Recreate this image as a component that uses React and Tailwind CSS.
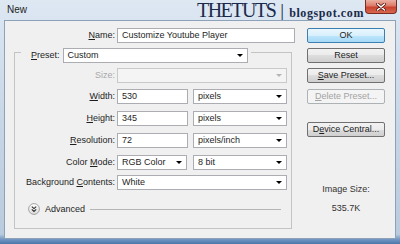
import React from 'react';

const labelCls = 'text-right text-[9px] leading-[15px] text-[#1e1e1e]';

const Key = ({ children }) => <span className="underline underline-offset-[1px]">{children}</span>;

const TextBox = ({ value, className = '' }) => (
  <div className={`h-[15px] bg-white border border-[#abadb3] pl-[4px] flex items-center text-[9px] text-[#1e1e1e] ${className}`}>
    {value}
  </div>
);

const Select = ({ value, className = '', disabled = false }) => (
  <div
    className={`h-[15px] border flex items-center pl-[4px] text-[9px] text-[#1e1e1e] ${
      disabled ? 'bg-[#f4f4f4] border-[#c9c9c9]' : 'bg-white border-[#abadb3]'
    } ${className}`}
  >
    <span>{value}</span>
    <span
      className={`ml-auto mr-[4px] w-0 h-0 border-l-[3px] border-r-[3px] border-t-[3px] border-l-transparent border-r-transparent ${
        disabled ? 'border-t-[#b5b5b5]' : 'border-t-black'
      }`}
    />
  </div>
);

const Button = ({ children, variant = 'normal', className = '' }) => {
  const styles = {
    normal: 'border-[#707070] bg-[linear-gradient(#f2f2f2,#ebebeb_50%,#dddddd_50%,#cfcfcf)] text-[#1e1e1e]',
    primary: 'border-[#3c7fb1] bg-[linear-gradient(#eaf6fd,#d9f0fc_50%,#bee6fd_50%,#a7d9f5)] text-[#1e1e1e]',
    disabled: 'border-[#adb2b5] bg-[#f4f4f4] text-[#a3a3a3]',
  };
  return (
    <div
      className={`h-[15px] w-[78px] rounded-[2px] border flex items-center justify-center text-[9px] ${styles[variant]} ${className}`}
    >
      {children}
    </div>
  );
};

const Row = ({ label, children, className = '' }) => (
  <div className={`flex items-start ${className}`}>
    <div className={`w-[100px] ${labelCls}`}>{label}</div>
    <div className="ml-[2px] flex items-start">{children}</div>
  </div>
);

export default function App() {
  return (
    <div className="w-[400px] h-[244px] flex flex-col overflow-hidden font-['Liberation_Sans',Arial,sans-serif] bg-[linear-gradient(#dde8f3,#cbd9e8_40%,#b9cbde_96%,#7598c3_98%,#4a76ab)]">
      {/* Title bar */}
      <div className="h-[20px] flex items-start shrink-0">
        <span className="ml-[7px] mt-[4px] text-[10px] leading-[12px] text-[#1e1e1e]">New</span>
        <div className="ml-auto flex items-start">
          <div className="flex items-baseline text-[#1b2a4a] font-['Liberation_Serif','Times_New_Roman',serif] mt-[1px]">
            <span className="text-[20px] leading-[19px] tracking-[-1.5px]">THETUTS</span>
            <span className="text-[19px] leading-[19px] ml-[5px]">|</span>
            <span className="text-[12px] leading-[19px] font-bold tracking-[0.6px] ml-[5px]">blogspot.com</span>
          </div>
          <div className="ml-[1px] mr-[3px] w-[32px] h-[14px] rounded-b-[4px] border border-t-0 border-[#7a2c22] bg-[linear-gradient(#eab0a2,#dc7a68_45%,#c8432f_55%,#d8684e)] flex items-center justify-center">
            <svg width="10" height="8" viewBox="0 0 10 8">
              <path d="M1.5 1 L8.5 7 M8.5 1 L1.5 7" stroke="#5a1a12" strokeWidth="3" strokeLinecap="round" />
              <path d="M1.5 1 L8.5 7 M8.5 1 L1.5 7" stroke="#ffffff" strokeWidth="1.6" strokeLinecap="round" />
            </svg>
          </div>
        </div>
      </div>

      {/* Client area */}
      <div className="flex-1 ml-[4px] mr-[4px] mb-[5px] border border-[#8da2b8] bg-[#f0f0f0] flex">
        {/* Left section */}
        <div className="pl-[9px] pt-[7px] w-[290px]">
          <div className="flex items-start">
            <div className={`w-[101px] ${labelCls}`}>
              <Key>N</Key>ame:
            </div>
            <TextBox value="Customize Youtube Player" className="ml-[2px] w-[178px]" />
          </div>

          {/* Preset group */}
          <div className="w-[278px] mt-[5px]">
            <div className="flex items-start h-[15px]">
              <div className="w-[7px] h-[11px] mt-[4px] border-t border-l border-[#c3c3c3]" />
              <div className="flex items-start pl-[10px] pr-[3px]">
                <span className="text-[9px] leading-[15px] text-[#1e1e1e]">
                  <Key>P</Key>reset:
                </span>
                <Select value="Custom" className="ml-[3px] w-[185px]" />
              </div>
              <div className="flex-1 h-[11px] mt-[4px] border-t border-r border-[#c3c3c3]" />
            </div>
            <div className="h-[166px] border-l border-r border-b border-[#c3c3c3] flex flex-col">
              <Row label={<span className="text-[#a9a9a9]">Size:</span>} className="mt-[5px]">
                <Select value="" disabled className="w-[170px]" />
              </Row>
              <Row label={<><Key>W</Key>idth:</>} className="mt-[6px]">
                <TextBox value="530" className="w-[71px]" />
                <Select value="pixels" className="ml-[5px] w-[94px]" />
              </Row>
              <Row label={<><Key>H</Key>eight:</>} className="mt-[7px]">
                <TextBox value="345" className="w-[71px]" />
                <Select value="pixels" className="ml-[5px] w-[94px]" />
              </Row>
              <Row label={<><Key>R</Key>esolution:</>} className="mt-[7px]">
                <TextBox value="72" className="w-[71px]" />
                <Select value="pixels/inch" className="ml-[5px] w-[94px]" />
              </Row>
              <Row label={<>Color <Key>M</Key>ode:</>} className="mt-[7px]">
                <Select value="RGB Color" className="w-[70px]" />
                <Select value="8 bit" className="ml-[6px] w-[94px]" />
              </Row>
              <Row label={<>Background <Key>C</Key>ontents:</>} className="mt-[5px]">
                <Select value="White" className="w-[170px]" />
              </Row>
              <div className="flex items-center mt-[13px] h-[12px]">
                <div className="ml-[13px] w-[12px] h-[12px]">
                  <svg width="12" height="12" viewBox="0 0 12 12">
                    <defs>
                      <linearGradient id="adv" x1="0" y1="0" x2="0" y2="1">
                        <stop offset="0" stopColor="#ffffff" />
                        <stop offset="1" stopColor="#dcdcdc" />
                      </linearGradient>
                    </defs>
                    <circle cx="6" cy="6" r="5.4" fill="url(#adv)" stroke="#9a9a9a" strokeWidth="0.9" />
                    <path d="M3.8 3.6 L6 5.6 L8.2 3.6 M3.8 6.4 L6 8.4 L8.2 6.4" fill="none" stroke="#2a2a2a" strokeWidth="1.1" />
                  </svg>
                </div>
                <span className="ml-[5px] text-[9px] leading-[12px] text-[#1e1e1e]">Advanced</span>
                <div className="ml-[5px] mr-[10px] flex-1 h-0 border-t border-[#b5b5b5]" />
              </div>
            </div>
          </div>
        </div>

        {/* Right section */}
        <div className="ml-[12px] pt-[7px] w-[78px] flex flex-col items-center">
          <Button variant="primary">OK</Button>
          <Button className="mt-[5px]">Reset</Button>
          <Button className="mt-[5px]">
            <span><Key>S</Key>ave Preset...</span>
          </Button>
          <Button variant="disabled" className="mt-[6px]">
            <span><Key>D</Key>elete Preset...</span>
          </Button>
          <Button className="mt-[18px]">
            <span>D<Key>e</Key>vice Central...</span>
          </Button>
          <div className="mt-[47px] text-[9px] leading-[11px] text-[#333333]">Image Size:</div>
          <div className="mt-[8px] text-[9px] leading-[11px] text-[#333333]">535.7K</div>
        </div>
      </div>
    </div>
  );
}
